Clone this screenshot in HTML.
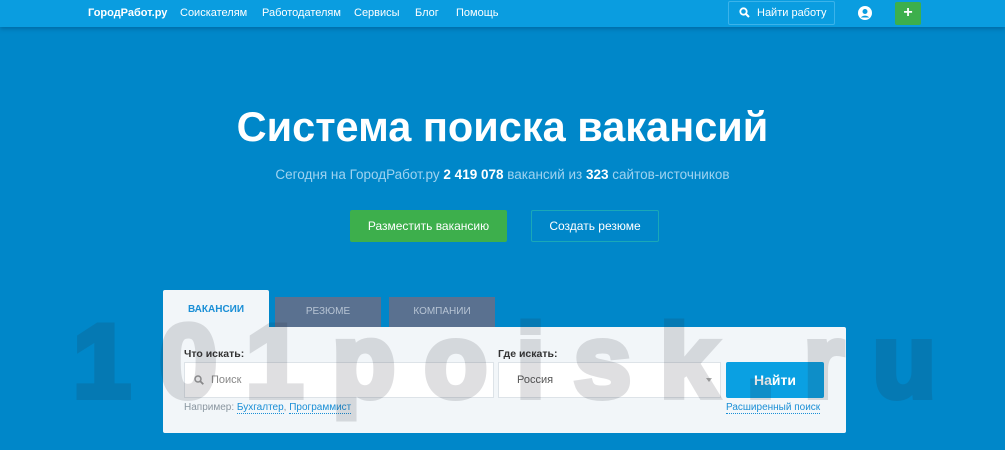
<!DOCTYPE html><html><head><meta charset="utf-8"><style>
*{margin:0;padding:0;box-sizing:border-box}
body{width:1005px;height:450px;overflow:hidden;background:#0087c9;font-family:"Liberation Sans",sans-serif;position:relative}
.hd{position:absolute;left:0;top:0;width:1005px;height:27px;background:#0a9de0;box-shadow:0 2px 4px rgba(0,60,100,.35)}
.hd span{position:absolute;top:7px;font-size:11px;color:#fff}
.a{position:absolute}
.wm{position:absolute;left:73px;top:303px;font:bold 104px "Liberation Sans",sans-serif;letter-spacing:28.5px;color:#282832;-webkit-text-stroke:6px #282832;opacity:.14;z-index:5;white-space:nowrap}
.inp{position:absolute;top:362px;height:36px;background:#fff;border:1px solid #dde3e8;font-size:11px;color:#666;padding:11px 0 0 0}
</style></head><body>
<div class="hd">
<span style="left:88px;font-weight:bold">ГородРабот.ру</span>
<span style="left:180px">Соискателям</span>
<span style="left:262px">Работодателям</span>
<span style="left:354px">Сервисы</span>
<span style="left:415px">Блог</span>
<span style="left:456px">Помощь</span>
<div class="a" style="left:728px;top:1px;width:107px;height:24px;border:1px solid #3bb3ea;border-radius:2px"></div>
<svg class="a" style="left:739px;top:7px" width="11" height="11" viewBox="0 0 11 11"><circle cx="4.5" cy="4.5" r="3.2" stroke="#fff" stroke-width="1.8" fill="none"/><path d="M7 7l3 3" stroke="#fff" stroke-width="2"/></svg>
<span style="left:757px">Найти работу</span>
<svg class="a" style="left:858px;top:6px" width="14" height="14" viewBox="0 0 14 14"><circle cx="7" cy="7" r="7" fill="#fff"/><circle cx="7" cy="5.5" r="2.5" fill="#0a9de0"/><path d="M2.8 11.5a5 4 0 0 1 8.4 0" fill="#0a9de0"/></svg>
<div class="a" style="left:895px;top:2px;width:26px;height:23px;background:#3daf4c;border-radius:2px;color:#fff;font-size:16px;text-align:center;line-height:22px;font-weight:bold">+</div>
</div>
<div class="a" style="left:0;top:103px;width:1005px;text-align:center;color:#fff;font-size:41.5px;font-weight:bold">Система поиска вакансий</div>
<div class="a" style="left:0;top:167px;width:1005px;text-align:center;color:#9fd3f0;font-size:13.5px">Сегодня на ГородРабот.ру <b style="color:#fff">2 419 078</b> вакансий из <b style="color:#fff">323</b> сайтов-источников</div>
<div class="a" style="left:350px;top:210px;width:157px;height:32px;background:#3daf4c;border-radius:2px;color:#fff;font-size:12px;text-align:center;line-height:32px">Разместить вакансию</div>
<div class="a" style="left:531px;top:210px;width:128px;height:32px;border:1px solid #1aa8b8;border-radius:2px;color:#fff;font-size:12px;text-align:center;line-height:30px">Создать резюме</div>
<div class="a" style="left:163px;top:290px;width:106px;height:40px;background:#f2f6f9;border-radius:2px 2px 0 0;color:#1a8fd6;font-size:10px;font-weight:bold;text-align:center;padding-top:14px">ВАКАНСИИ</div>
<div class="a" style="left:275px;top:297px;width:106px;height:30px;background:#5a7190;color:#b7c4d4;font-size:10px;text-align:center;line-height:30px">РЕЗЮМЕ</div>
<div class="a" style="left:389px;top:297px;width:106px;height:30px;background:#5a7190;color:#b7c4d4;font-size:10px;text-align:center;line-height:30px">КОМПАНИИ</div>
<div class="a" style="left:163px;top:327px;width:683px;height:106px;background:#f2f6f9;border-radius:0 2px 2px 2px"></div>
<div class="a" style="left:184px;top:348px;font-size:10.5px;font-weight:bold;color:#333">Что искать:</div>
<div class="a" style="left:498px;top:348px;font-size:10.5px;font-weight:bold;color:#333">Где искать:</div>
<div class="inp" style="left:184px;width:310px;padding-left:26px;color:#888">Поиск</div>
<svg class="a" style="left:194px;top:375px" width="10" height="10" viewBox="0 0 10 10"><circle cx="4" cy="4" r="3" stroke="#999" stroke-width="1.5" fill="none"/><path d="M6.3 6.3l3 3" stroke="#999" stroke-width="1.8"/></svg>
<div class="inp" style="left:498px;width:223px;padding-left:18px;color:#555">Россия</div>
<div class="a" style="left:706px;top:378px;width:0;height:0;border-left:3.5px solid transparent;border-right:3.5px solid transparent;border-top:4px solid #aaa"></div>
<div class="a" style="left:726px;top:362px;width:98px;height:36px;background:#0aa0e2;border-radius:2px;color:#fff;font-size:14px;font-weight:bold;text-align:center;line-height:36px">Найти</div>
<div class="a" style="left:184px;top:402px;font-size:10px;color:#8a96a0">Например: <span style="color:#1a8fd6;border-bottom:1px dotted #1a8fd6">Бухгалтер</span>, <span style="color:#1a8fd6;border-bottom:1px dotted #1a8fd6">Программист</span></div>
<div class="a" style="left:726px;top:402px;font-size:10px;color:#1a8fd6;border-bottom:1px dotted #1a8fd6">Расширенный поиск</div>
<div class="wm">101poisk.ru</div>
</body></html>
